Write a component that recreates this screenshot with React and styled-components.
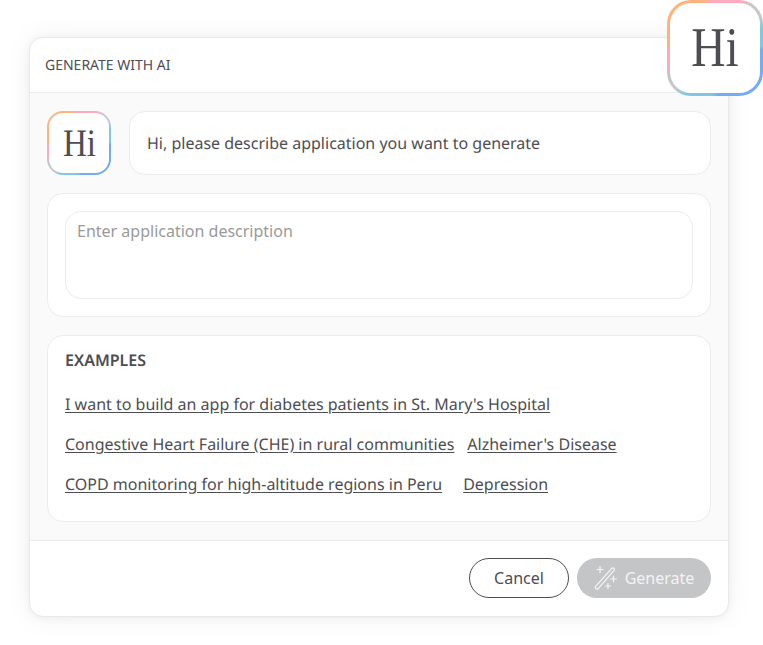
import React from 'react'
import styled, { createGlobalStyle } from 'styled-components'

const GlobalStyle = createGlobalStyle`
  html, body {
    margin: 0;
    padding: 0;
    background: #fff;
    font-family: "Noto Sans", "Open Sans", sans-serif;
    color: #4d4d52;
    text-rendering: geometricPrecision;
  }
`

const Page = styled.div`
  position: relative;
  width: 763px;
  height: 645px;
  overflow: hidden;
  padding: 37px 34px 28px 29px;
  box-sizing: border-box;
`

const Dialog = styled.div`
  height: 580px;
  display: flex;
  flex-direction: column;
  background: #fff;
  border: 1px solid #e9e9e9;
  border-radius: 14px;
  box-shadow: 0 1px 8px rgba(0, 0, 0, 0.05), 0 0 30px rgba(0, 0, 0, 0.06);
  box-sizing: border-box;
  overflow: hidden;
`

const Header = styled.div`
  height: 55px;
  flex: none;
  display: flex;
  align-items: center;
  padding: 0 15px;
  box-sizing: border-box;
  border-bottom: 1px solid #ececec;
  font-size: 14px;
`

const Body = styled.div`
  flex: 1;
  display: flex;
  flex-direction: column;
  gap: 18px;
  padding: 18px 17px;
  background: #fafafa;
`

const Greeting = styled.div`
  display: flex;
  gap: 18px;
`

const Badge = styled.div`
  width: ${p => p.$size}px;
  height: ${p => p.$size}px;
  flex: none;
  box-sizing: border-box;
  padding: ${p => p.$border}px;
  border-radius: ${p => p.$radius}px;
  background: conic-gradient(
    #ffa9c0 0deg, #ffa9c0 28deg, #c8c8c8 40deg, #c4c8cc 55deg,
    #7fc8e0 68deg, #7fc8e0 88deg, #75aaf5 92deg, #75aaf5 176deg,
    #7fc8e0 184deg, #7fc8e0 212deg, #c8c8c8 224deg, #c4c4c4 238deg,
    #ffa9c0 250deg, #ffa9c0 268deg, #ffb27c 272deg, #ffb27c 345deg, #ffa9c0 358deg
  );
`

const FloatingBadge = styled(Badge)`
  position: absolute;
  top: 0;
  right: 0;
`

const BadgeInner = styled.div`
  width: 100%;
  height: 100%;
  display: flex;
  align-items: center;
  justify-content: center;
  background: #fff;
  border-radius: ${p => p.$radius}px;
`

const BadgeText = styled.span`
  font-family: "Liberation Serif", serif;
  font-size: ${p => p.$font}px;
  line-height: 1;
  color: #4d4d52;
  transform: scaleX(0.85);
`

const Bubble = styled.div`
  flex: 1;
  display: flex;
  align-items: center;
  padding: 0 17px;
  background: #fff;
  border: 1px solid #ececec;
  border-radius: 16px;
  font-size: 16px;
`

const Card = styled.div`
  background: #fff;
  border: 1px solid #ececec;
  border-radius: 16px;
  padding: 17px;
`

const DescriptionInput = styled.textarea`
  display: block;
  width: 100%;
  height: 88px;
  box-sizing: border-box;
  padding: 7px 11px;
  border: 1px solid #ececec;
  border-radius: 16px;
  background: #fff;
  font: 16px/24px "Noto Sans", "Open Sans", sans-serif;
  color: #4d4d52;
  resize: none;
  outline: none;

  &::placeholder {
    color: #9a9a9a;
    opacity: 1;
  }
`

const ExamplesTitle = styled.div`
  font-size: 16px;
  font-weight: 600;
  line-height: 14px;
  margin-bottom: 17px;
`

const ExampleRow = styled.div`
  display: flex;
  gap: ${p => p.$gap}px;
  height: 40px;
  align-items: center;
`

const ExampleLink = styled.a`
  font-size: 16px;
  color: #4d4d52;
  text-decoration: underline;
  text-underline-offset: 2px;
`

const Footer = styled.div`
  height: 76px;
  flex: none;
  display: flex;
  justify-content: flex-end;
  align-items: center;
  gap: 8px;
  padding: 0 17px 1px;
  box-sizing: border-box;
  border-top: 1px solid #ececec;
`

const Button = styled.button`
  height: 40px;
  border-radius: 20px;
  font: 16px "Noto Sans", "Open Sans", sans-serif;
  display: flex;
  align-items: center;
  justify-content: center;
  box-sizing: border-box;
`

const CancelButton = styled(Button)`
  width: 100px;
  background: #fff;
  border: 1px solid #4d4d52;
  color: #4d4d52;
`

const GenerateButton = styled(Button)`
  width: 134px;
  gap: 7px;
  background: #c4c5c7;
  border: none;
  color: #f3f3f3;
`

const WandIcon = () => (
  <svg width="24" height="24" viewBox="0 0 24 24" fill="none" stroke="#f6f6f6" strokeWidth="1.2" strokeLinecap="round" strokeLinejoin="round">
    <path d="M1.6 20.4 L17.8 2.4 a1.5 1.5 0 0 1 2.3 2 L4.4 22.4 a1.6 1.6 0 0 1 -2.8 -2 Z" />
    <path d="M6 0.5 v6 M3 3.5 h6" />
    <path d="M19.5 10 v6 M16.5 13 h6" />
    <path d="M14 17.5 v5 M11.5 20 h5" />
  </svg>
)

const HiBadge = ({ as: Wrapper = Badge, size, border, radius, font }) => (
  <Wrapper $size={size} $border={border} $radius={radius}>
    <BadgeInner $radius={radius - border}>
      <BadgeText $font={font}>Hi</BadgeText>
    </BadgeInner>
  </Wrapper>
)

const App = () => {
  return (
    <Page>
      <GlobalStyle />
      <Dialog>
        <Header>GENERATE WITH AI</Header>
        <Body>
          <Greeting>
            <HiBadge size={64} border={2} radius={16} font={39} />
            <Bubble>Hi, please describe application you want to generate</Bubble>
          </Greeting>
          <Card>
            <DescriptionInput placeholder="Enter application description" />
          </Card>
          <Card>
            <ExamplesTitle>EXAMPLES</ExamplesTitle>
            <ExampleRow><ExampleLink>I want to build an app for diabetes patients in St. Mary's Hospital</ExampleLink></ExampleRow>
            <ExampleRow $gap={13}>
              <ExampleLink>Congestive Heart Failure (CHE) in rural communities</ExampleLink>
              <ExampleLink>Alzheimer's Disease</ExampleLink>
            </ExampleRow>
            <ExampleRow $gap={21}>
              <ExampleLink>COPD monitoring for high-altitude regions in Peru</ExampleLink>
              <ExampleLink>Depression</ExampleLink>
            </ExampleRow>
          </Card>
        </Body>
        <Footer>
          <CancelButton>Cancel</CancelButton>
          <GenerateButton><WandIcon />Generate</GenerateButton>
        </Footer>
      </Dialog>
      <HiBadge as={FloatingBadge} size={96} border={3} radius={24} font={56} />
    </Page>
  )
}

export default App
